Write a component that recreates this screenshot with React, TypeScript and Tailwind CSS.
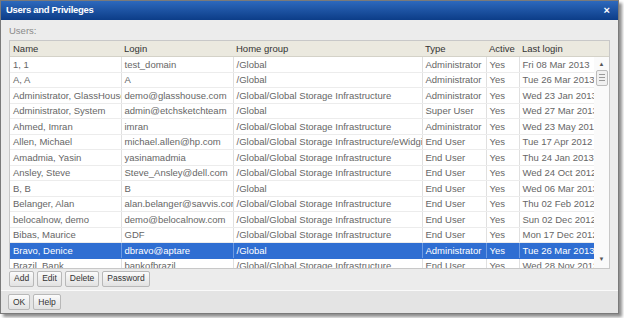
import React from 'react';

type Row = [string, string, string, string, string, string];

const rows: Row[] = [
  ['1, 1', 'test_domain', '/Global', 'Administrator', 'Yes', 'Fri 08 Mar 2013'],
  ['A, A', 'A', '/Global', 'Administrator', 'Yes', 'Tue 26 Mar 2013'],
  ['Administrator, GlassHouse', 'demo@glasshouse.com', '/Global/Global Storage Infrastructure', 'Administrator', 'Yes', 'Wed 23 Jan 2013'],
  ['Administrator, System', 'admin@etchsketchteam', '/Global', 'Super User', 'Yes', 'Wed 27 Mar 2013'],
  ['Ahmed, Imran', 'imran', '/Global/Global Storage Infrastructure', 'Administrator', 'Yes', 'Wed 23 May 2012'],
  ['Allen, Michael', 'michael.allen@hp.com', '/Global/Global Storage Infrastructure/eWidgit', 'End User', 'Yes', 'Tue 17 Apr 2012'],
  ['Amadmia, Yasin', 'yasinamadmia', '/Global/Global Storage Infrastructure', 'End User', 'Yes', 'Thu 24 Jan 2013'],
  ['Ansley, Steve', 'Steve_Ansley@dell.com', '/Global/Global Storage Infrastructure', 'End User', 'Yes', 'Wed 24 Oct 2012'],
  ['B, B', 'B', '/Global', 'End User', 'Yes', 'Wed 06 Mar 2013'],
  ['Belanger, Alan', 'alan.belanger@savvis.com', '/Global/Global Storage Infrastructure', 'End User', 'Yes', 'Thu 02 Feb 2012'],
  ['belocalnow, demo', 'demo@belocalnow.com', '/Global/Global Storage Infrastructure', 'End User', 'Yes', 'Sun 02 Dec 2012'],
  ['Bibas, Maurice', 'GDF', '/Global/Global Storage Infrastructure', 'End User', 'Yes', 'Mon 17 Dec 2012'],
  ['Bravo, Denice', 'dbravo@aptare', '/Global', 'Administrator', 'Yes', 'Tue 26 Mar 2013'],
  ['Brazil, Bank', 'bankofbrazil', '/Global/Global Storage Infrastructure', 'End User', 'Yes', 'Wed 28 Nov 2012'],
];

const headers = ['Name', 'Login', 'Home group', 'Type', 'Active', 'Last login'];
const widths = ['w-[111px]', 'w-[112px]', 'w-[189px]', 'w-[64px]', 'w-[33px]', 'w-[79px]'];

const Btn: React.FC<{ label: string }> = ({ label }) => (
  <button className="h-[16px] px-[4px] text-[8.5px] leading-none text-[#333] border border-[#b8b8b8] rounded-[2px] bg-gradient-to-b from-[#fbfbfb] to-[#e2e2e2]">
    {label}
  </button>
);

const UsersTable: React.FC = () => (
  <div className="flex h-[229px] border border-[#c8c8c8] bg-white">
    <div className="w-[588px] overflow-hidden">
      <table className="table-fixed border-collapse w-[588px] text-[9.5px] leading-none">
        <colgroup>
          {widths.map((w, i) => (
            <col key={i} className={w} />
          ))}
        </colgroup>
        <thead>
          <tr className="h-[16px] bg-[#ebe9df] text-[#333]">
            {headers.map((h) => (
              <th key={h} className="text-left font-normal pl-[3px] border-b border-[#d4d2c8] whitespace-nowrap overflow-hidden">
                {h}
              </th>
            ))}
          </tr>
        </thead>
        <tbody>
          {rows.map((r, i) => {
            const selected = r[0] === 'Bravo, Denice';
            return (
              <tr
                key={i}
                className={selected ? 'h-[15.5px] bg-[#2f6ed2] text-white' : 'h-[15.5px] text-[#666]'}
              >
                {r.map((c, j) => (
                  <td
                    key={j}
                    className={
                      'pl-[3px] whitespace-nowrap overflow-hidden border-b ' +
                      (selected
                        ? 'border-[#2f6ed2] border-r border-r-[#6d9be3]'
                        : 'border-[#ececec] border-r border-r-[#e0e0e0]')
                    }
                  >
                    {c}
                  </td>
                ))}
              </tr>
            );
          })}
        </tbody>
      </table>
    </div>
    <div className="w-[15px] flex flex-col">
      <div className="h-[16px] bg-[#ebe9df] border-b border-[#d4d2c8]" />
      <div className="flex-1 flex flex-col items-center bg-[#fafafa] pt-[4px] pb-[6px]">
        <span className="text-[6px] text-[#555] leading-none">▲</span>
        <div className="mt-[3px] w-[12px] h-[16px] border border-[#bbb] rounded-[2px] bg-[#f0f0f0] flex flex-col items-center justify-center gap-[2px]">
          <div className="w-[6px] h-px bg-[#999]" />
          <div className="w-[6px] h-px bg-[#999]" />
          <div className="w-[6px] h-px bg-[#999]" />
        </div>
        <div className="flex-1" />
        <span className="text-[6px] text-[#555] leading-none">▼</span>
      </div>
    </div>
  </div>
);

export default function App() {
  return (
    <div className="w-[624px] h-[318px] bg-white" style={{ fontFamily: '"Liberation Sans", Arial, sans-serif' }}>
      <div className="w-[619px] h-[314px] flex flex-col border border-[#7a7a7a] bg-[#ececec] shadow-[3px_3px_3px_rgba(0,0,0,0.45)]">
        <div className="h-[19px] flex items-center justify-between px-[5px] bg-gradient-to-b from-[#2d69bd] to-[#0c3d88]">
          <span className="text-white font-bold text-[9.5px] tracking-[-0.3px]">Users and Privileges</span>
          <span className="text-white font-bold text-[11px] leading-none mr-[3px]">×</span>
        </div>
        <div className="flex-1 flex flex-col px-[8px]">
          <div className="h-[20px] flex items-center text-[9.5px] text-[#8a8a8a] pt-[3px]">Users:</div>
          <UsersTable />
          <div className="flex gap-[3px] pt-[2px] h-[21px]">
            <Btn label="Add" />
            <Btn label="Edit" />
            <Btn label="Delete" />
            <Btn label="Password" />
          </div>
        </div>
        <div className="h-[24px] border-t border-t-[#fafafa] flex items-center gap-[3px] px-[7px] bg-[#e4e4e4]">
          <Btn label="OK" />
          <Btn label="Help" />
        </div>
      </div>
    </div>
  );
}
